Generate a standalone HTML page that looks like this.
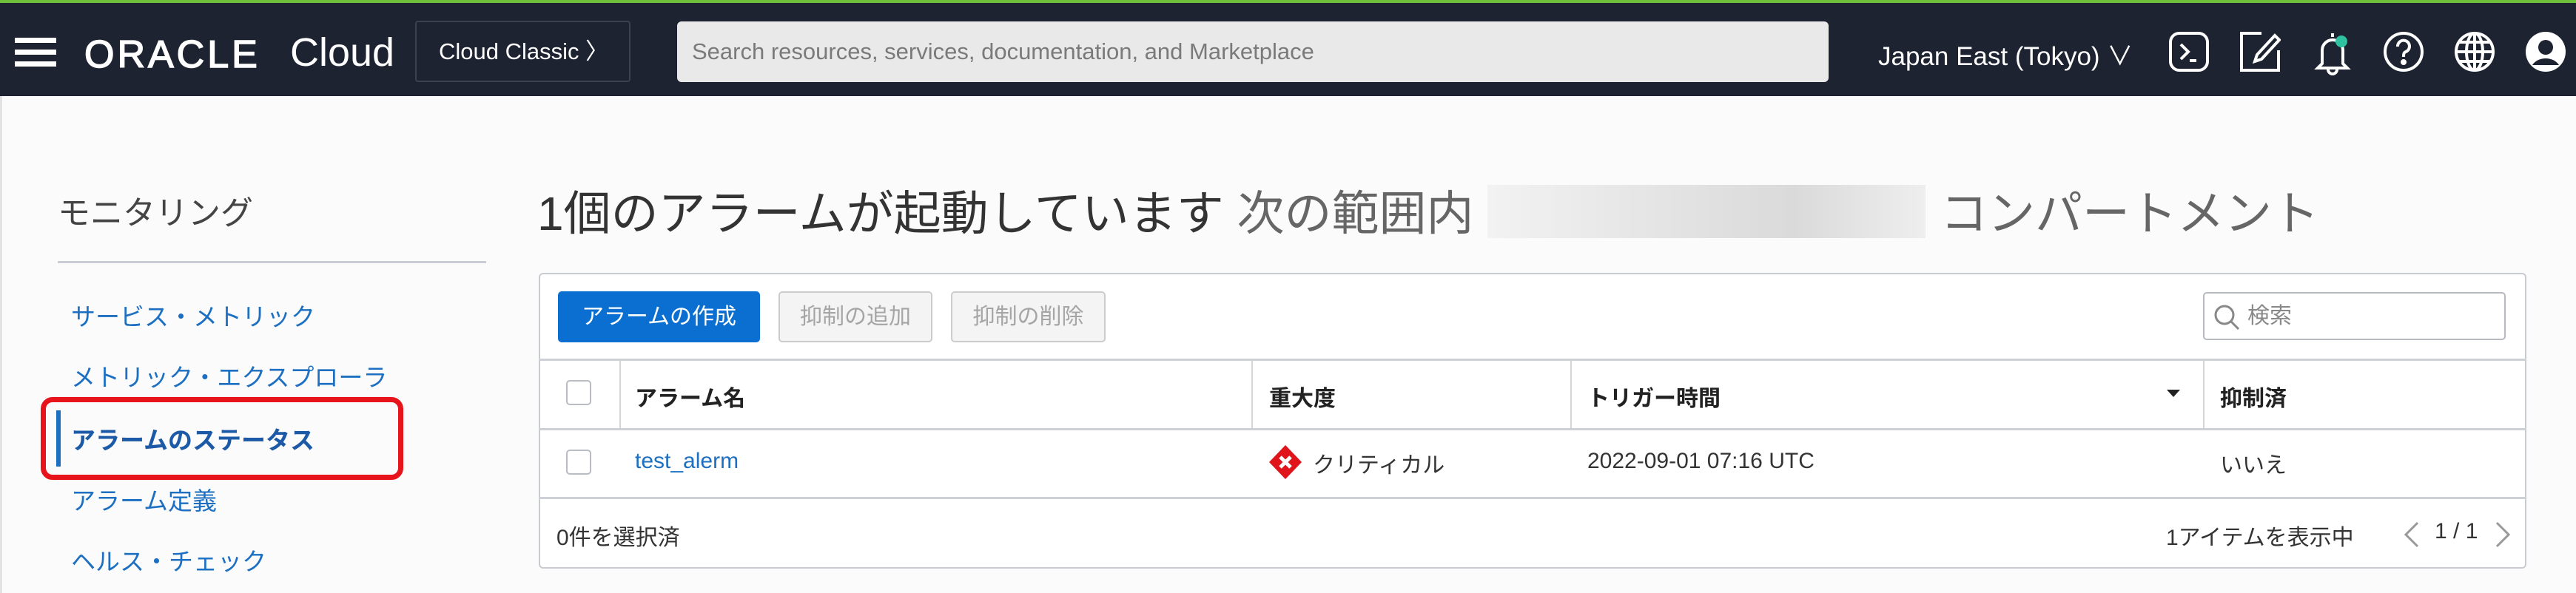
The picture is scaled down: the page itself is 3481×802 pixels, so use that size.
<!DOCTYPE html>
<html><head><meta charset="utf-8"><style>
*{box-sizing:border-box;margin:0;padding:0}
body{width:3481px;height:802px;overflow:hidden;background:#fbfbfb;font-family:"Liberation Sans","Noto Sans CJK JP",sans-serif;position:relative;color:#333}
.a{position:absolute;white-space:nowrap}
#hdr{position:absolute;left:0;top:0;width:3481px;height:130px;background:#1d2331;border-top:4px solid #6fbf3a}
.ic{position:absolute;top:38px}
.nav{font-size:33px;color:#1c6fc1}
.th{font-size:30px;font-weight:bold;color:#222}
.td{font-size:30px;color:#333}
.cb{position:absolute;width:34px;height:34px;border:2px solid #b9bcc2;border-radius:5px;background:#fff}
</style></head><body>
<div id="hdr">
 <div class="a" style="left:20px;top:47px;width:56px;height:7px;background:#fff"></div>
 <div class="a" style="left:20px;top:63px;width:56px;height:7px;background:#fff"></div>
 <div class="a" style="left:20px;top:79px;width:56px;height:7px;background:#fff"></div>
 <div class="a" style="left:114px;top:40px;font-size:52px;color:#fff;letter-spacing:4px;-webkit-text-stroke:1.5px #fff">ORACLE</div>
 <div class="a" style="left:392px;top:36px;font-size:54px;color:#fff">Cloud</div>
 <div class="a" style="left:561px;top:24px;width:291px;height:83px;border:2px solid #3b4150;border-radius:4px;color:#fff;font-size:31px;line-height:79px;padding-left:30px">Cloud Classic 〉</div>
 <div class="a" style="left:915px;top:25px;width:1556px;height:82px;background:#e9e9e9;border-radius:6px;color:#7a7a7a;font-size:31px;line-height:82px;padding-left:20px">Search resources, services, documentation, and Marketplace</div>
 <div class="a" style="left:2538px;top:44px;font-size:35px;color:#fff">Japan East (Tokyo) ∨</div>
 <svg class="ic" style="left:2930px" width="56" height="56" viewBox="0 0 56 56" fill="none" stroke="#fff" stroke-width="4"><rect x="3" y="3" width="50" height="50" rx="12"/><path d="M17 18l10 10-10 10M29 40h9"/></svg>
 <svg class="ic" style="left:3026px" width="56" height="56" viewBox="0 0 56 56" fill="none" stroke="#fff" stroke-width="4"><path d="M30 3H3v50h50V26"/><path d="M48 6l6 6-24 26-9 3 3-9z"/></svg>
 <svg class="ic" style="left:3124px" width="56" height="60" viewBox="0 0 56 60" fill="none" stroke="#fff" stroke-width="4"><path d="M28 3v5M14 44V26a14 14 0 0 1 28 0v18l6 6H8z"/><path d="M22 52a6 6 0 0 0 12 0"/><circle cx="40" cy="14" r="8" fill="#2fc2a0" stroke="none"/></svg>
 <svg class="ic" style="left:3220px" width="56" height="56" viewBox="0 0 56 56" fill="none" stroke="#fff" stroke-width="4"><circle cx="28" cy="28" r="25"/><path d="M20 21a8 8 0 1 1 11 7c-3 1-3 4-3 7"/><circle cx="28" cy="42" r="2" fill="#fff"/></svg>
 <svg class="ic" style="left:3316px" width="56" height="56" viewBox="0 0 56 56" fill="none" stroke="#fff" stroke-width="4"><circle cx="28" cy="28" r="25"/><ellipse cx="28" cy="28" rx="11" ry="25"/><path d="M3 28h50M8 15h40M8 41h40M28 3v50"/></svg>
 <svg class="ic" style="left:3412px" width="56" height="56" viewBox="0 0 56 56"><circle cx="28" cy="28" r="27" fill="#fff"/><circle cx="28" cy="22" r="10" fill="#1d2331"/><path d="M10 46a20 16 0 0 1 36 0" fill="#1d2331"/></svg>
</div>
<div class="a" style="left:0;top:130px;width:3px;height:672px;background:#e3e3e3"></div>
<div class="a" style="left:78px;top:252px;font-size:44px;color:#444">モニタリング</div>
<div class="a" style="left:78px;top:353px;width:579px;height:3px;background:#c9ccd2"></div>
<div class="a nav" style="left:96px;top:402px">サービス・メトリック</div>
<div class="a nav" style="left:96px;top:484px">メトリック・エクスプローラ</div>
<div class="a" style="left:76px;top:555px;width:6px;height:76px;background:#1c6fc1"></div>
<div class="a nav" style="left:96px;top:569px;font-weight:bold;color:#1c5aa8">アラームのステータス</div>
<div class="a" style="left:55px;top:537px;width:490px;height:112px;border:7px solid #e8141b;border-radius:16px"></div>
<div class="a nav" style="left:96px;top:651px">アラーム定義</div>
<div class="a nav" style="left:96px;top:733px">ヘルス・チェック</div>
<div class="a" style="left:726px;top:238px;font-size:64px;color:#333">1個のアラームが起動しています <span style="color:#666">次の範囲内</span></div>
<div class="a" style="left:2010px;top:250px;width:592px;height:72px;background:linear-gradient(90deg,#f2f2f2,#e4e4e4 40%,#dadada 70%,#eee)"></div>
<div class="a" style="left:2622px;top:238px;font-size:64px;color:#666">コンパートメント</div>
<div class="a" style="left:728px;top:369px;width:2686px;height:400px;border:2px solid #c8cbd0;border-radius:6px;background:#fff"></div>
<div class="a" style="left:754px;top:394px;width:273px;height:69px;background:#0a6fd0;border-radius:5px;color:#fff;font-size:30px;line-height:69px;text-align:center">アラームの作成</div>
<div class="a" style="left:1052px;top:394px;width:208px;height:69px;border:2px solid #ccc;background:#f4f4f4;border-radius:5px;color:#a5a5a5;font-size:30px;line-height:65px;text-align:center">抑制の追加</div>
<div class="a" style="left:1285px;top:394px;width:209px;height:69px;border:2px solid #ccc;background:#f4f4f4;border-radius:5px;color:#a5a5a5;font-size:30px;line-height:65px;text-align:center">抑制の削除</div>
<div class="a" style="left:2977px;top:395px;width:409px;height:65px;border:2px solid #b7bac0;border-radius:5px;color:#888;font-size:30px;line-height:61px;padding-left:58px">検索</div>
<svg class="a" style="left:2990px;top:410px" width="38" height="38" viewBox="0 0 38 38" fill="none" stroke="#888" stroke-width="3"><circle cx="16" cy="16" r="12"/><path d="M25 25l10 10"/></svg>
<div class="a" style="left:729px;top:485px;width:2684px;height:3px;background:#cdd0d4"></div>
<div class="a" style="left:837px;top:487px;width:2px;height:93px;background:#d3d5d9"></div>
<div class="a" style="left:1691px;top:487px;width:2px;height:93px;background:#d3d5d9"></div>
<div class="a" style="left:2122px;top:487px;width:2px;height:93px;background:#d3d5d9"></div>
<div class="a" style="left:2977px;top:487px;width:2px;height:93px;background:#d3d5d9"></div>
<div class="a" style="left:729px;top:579px;width:2684px;height:3px;background:#cdd0d4"></div>
<div class="a" style="left:729px;top:672px;width:2684px;height:3px;background:#cdd0d4"></div>
<div class="cb" style="left:765px;top:514px"></div>
<div class="a th" style="left:858px;top:514px">アラーム名</div>
<div class="a th" style="left:1715px;top:514px">重大度</div>
<div class="a th" style="left:2145px;top:514px">トリガー時間</div>
<div class="a" style="left:2928px;top:527px;width:0;height:0;border-left:9px solid transparent;border-right:9px solid transparent;border-top:10px solid #222"></div>
<div class="a th" style="left:3000px;top:514px">抑制済</div>
<div class="cb" style="left:765px;top:608px"></div>
<div class="a td" style="left:858px;top:607px;color:#1c6fc1">test_alerm</div>
<svg class="a" style="left:1714px;top:601px" width="46" height="48" viewBox="0 0 46 48"><path d="M23 1L45 24 23 47 1 24z" fill="#e0141b"/><path d="M16 17l14 14M30 17L16 31" stroke="#fff" stroke-width="5"/></svg>
<div class="a td" style="left:1774px;top:604px">クリティカル</div>
<div class="a td" style="left:2145px;top:607px">2022-09-01 07:16 UTC</div>
<div class="a td" style="left:3000px;top:604px">いいえ</div>
<div class="a td" style="left:752px;top:702px">0件を選択済</div>
<div class="a td" style="left:2927px;top:702px">1アイテムを表示中</div>
<svg class="a" style="left:3247px;top:705px" width="24" height="36" viewBox="0 0 24 36" fill="none" stroke="#999" stroke-width="3"><path d="M20 2L4 18l16 16"/></svg>
<div class="a td" style="left:3290px;top:702px">1 / 1</div>
<svg class="a" style="left:3370px;top:705px" width="24" height="36" viewBox="0 0 24 36" fill="none" stroke="#999" stroke-width="3"><path d="M4 2l16 16L4 34"/></svg>
</body></html>
